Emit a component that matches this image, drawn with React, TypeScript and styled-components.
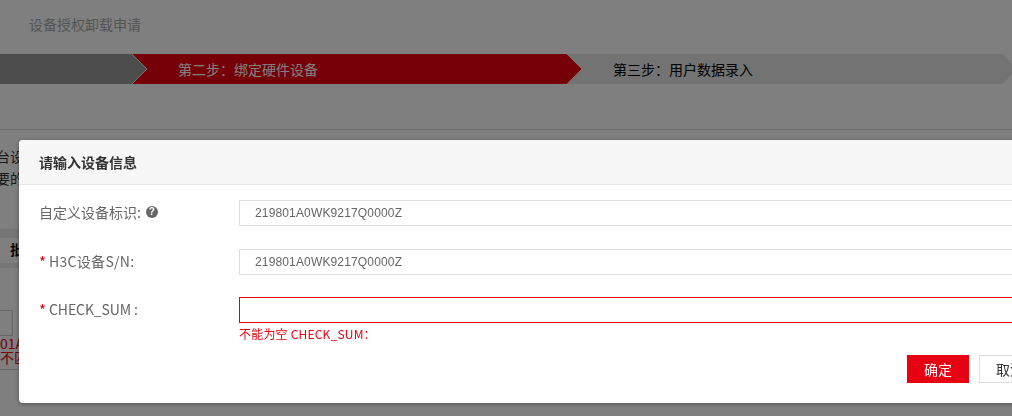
import React from "react";
import styled, { createGlobalStyle } from "styled-components";

const GlobalStyle = createGlobalStyle`
  html, body {
    margin: 0;
    padding: 0;
    width: 1012px;
    height: 416px;
    overflow: hidden;
    background: #fff;
    font-family: "Noto Sans CJK SC", "Liberation Sans", sans-serif;
  }
  * { box-sizing: border-box; }
`;

const Page = styled.div`
  width: 1012px;
  height: 416px;
  overflow: hidden;
  background: #fff;
`;

const PageTitle = styled.div`
  height: 54px;
  padding: 0 0 6px 29px;
  display: flex;
  align-items: center;
  font-size: 14px;
  color: #a8a8a8;
`;

const StepBar = styled.div`
  display: flex;
  height: 30px;
`;

const Step = styled.div<{ $width: number; $bg: string; $color: string; $z: number }>`
  position: relative;
  z-index: ${(p) => p.$z};
  flex: 0 0 ${(p) => p.$width}px;
  height: 30px;
  padding-left: 46px;
  display: flex;
  align-items: center;
  font-size: 14px;
  background: ${(p) => p.$bg};
  color: ${(p) => p.$color};
`;

const Arrow = styled.svg`
  position: absolute;
  top: 0;
  left: 100%;
  width: 16px;
  height: 30px;
`;

const Notice = styled.div`
  height: 46px;
  border-bottom: 1px solid #d8d8d8;
`;

const NoticeLines = styled.div`
  padding-top: 15px;
  height: 99px;
  font-size: 14px;
  line-height: 22px;
  color: #333;
  white-space: nowrap;
`;

const ClippedLine = styled.div`
  margin-left: -4px;
`;

const Band = styled.div<{ $height: number }>`
  height: ${(p) => p.$height}px;
  background: #eaeaea;
`;

const Tab = styled.div`
  height: 25px;
  padding: 0 0 3px 10px;
  display: flex;
  align-items: center;
  font-size: 14px;
  font-weight: 700;
  color: #111;
`;

const ErrorBlock = styled.div`
  height: 102px;
  padding-top: 42px;
  border-bottom: 1px solid #ccc;
`;

const GhostInput = styled.div`
  width: 13px;
  height: 26px;
  border: 1px solid #ccc;
  border-left: none;
`;

const GhostError = styled.div`
  font-size: 14px;
  line-height: 14px;
  color: #e60012;
  white-space: nowrap;
  &:first-of-type {
    margin-top: 1px;
  }
`;

const Overlay = styled.div`
  position: fixed;
  inset: 0;
  z-index: 10;
  display: flex;
  align-items: flex-start;
  padding: 140px 0 0 19px;
  background: rgba(0, 0, 0, 0.5);
  overflow: hidden;
`;

const Modal = styled.div`
  flex: 0 0 1042px;
  height: 263px;
  background: #fff;
  border-radius: 4px;
  box-shadow: 0 1px 4px rgba(0, 0, 0, 0.35);
  overflow: hidden;
`;

const ModalHeader = styled.div`
  height: 45px;
  padding: 0 0 1px 20px;
  display: flex;
  align-items: center;
  background: #f7f7f7;
  border-bottom: 1px solid #e8e8e8;
  font-size: 14px;
  font-weight: 700;
  color: #333;
`;

const ModalBody = styled.div`
  padding: 15px 20px 0;
`;

const FormRow = styled.div<{ $gap: number }>`
  display: grid;
  grid-template-columns: 200px 1fr;
  margin-bottom: ${(p) => p.$gap}px;
`;

const Label = styled.div`
  height: 26px;
  padding-bottom: 2px;
  display: flex;
  align-items: center;
  font-size: 14px;
  color: #666;
  white-space: nowrap;
`;

const Star = styled.span`
  width: 10px;
  flex: none;
  font-size: 15px;
  color: #e60012;
`;

const LabelText = styled.span<{ $spacing: number }>`
  letter-spacing: ${(p) => p.$spacing}px;
`;

const HelpIcon = styled.span`
  width: 12px;
  height: 12px;
  margin-left: 5px;
  border-radius: 50%;
  background: #666;
  color: #fff;
  font: 700 10px/12px "Liberation Sans", sans-serif;
  text-align: center;
`;

const FieldBox = styled.div<{ $invalid?: boolean }>`
  height: 26px;
  padding-left: 15px;
  display: flex;
  align-items: center;
  border: 1px solid ${(p) => (p.$invalid ? "#e60012" : "#dddde3")};
  font: 12px "Liberation Sans", sans-serif;
  letter-spacing: 0.15px;
  color: #666;
`;

const FieldError = styled.div`
  grid-column: 2;
  height: 20px;
  display: flex;
  align-items: center;
  font-size: 12px;
  letter-spacing: 0.2px;
  color: #e60012;
`;

const Actions = styled.div`
  display: flex;
  justify-content: flex-end;
  gap: 10px;
  margin-top: 12px;
`;

const Button = styled.button<{ $primary?: boolean }>`
  width: 62px;
  height: 28px;
  padding: 0;
  border: 1px solid ${(p) => (p.$primary ? "#e60012" : "#dddde3")};
  background: ${(p) => (p.$primary ? "#e60012" : "#fff")};
  color: ${(p) => (p.$primary ? "#fff" : "#333")};
  font-family: inherit;
  font-size: 14px;
`;

const chevron = (fill: string) => (
  <Arrow viewBox="0 0 16 30">
    <path d="M0 0 L15 15 L0 30 Z" fill={fill} />
    <path d="M0 0 L15 15 L0 30" fill="none" stroke="#fff" strokeOpacity="0.75" strokeWidth="1" />
  </Arrow>
);

const App = () => {
  return (
    <Page>
      <GlobalStyle />
      <PageTitle>设备授权卸载申请</PageTitle>
      <StepBar>
        <Step $width={132} $bg="#9a9a9a" $color="#fff" $z={3}>
          {chevron("#9a9a9a")}
        </Step>
        <Step $width={435} $bg="#ec0010" $color="#fff" $z={2}>
          第二步：绑定硬件设备
          {chevron("#ec0010")}
        </Step>
        <Step $width={436} $bg="#e6e6e6" $color="#000" $z={1}>
          第三步：用户数据录入
          {chevron("#e6e6e6")}
        </Step>
      </StepBar>
      <Notice />
      <NoticeLines>
        <ClippedLine>台设备</ClippedLine>
        <ClippedLine>要的</ClippedLine>
      </NoticeLines>
      <Band $height={9} />
      <Tab>批</Tab>
      <Band $height={5} />
      <ErrorBlock>
        <GhostInput />
        <GhostError>01A</GhostError>
        <GhostError>不匹</GhostError>
      </ErrorBlock>

      <Overlay>
        <Modal>
          <ModalHeader>请输入设备信息</ModalHeader>
          <ModalBody>
            <FormRow $gap={23}>
              <Label>
                自定义设备标识:
                <HelpIcon>?</HelpIcon>
              </Label>
              <FieldBox>219801A0WK9217Q0000Z</FieldBox>
            </FormRow>
            <FormRow $gap={22}>
              <Label>
                <Star>*</Star>
                <LabelText $spacing={0.3}>H3C设备S/N:</LabelText>
              </Label>
              <FieldBox>219801A0WK9217Q0000Z</FieldBox>
            </FormRow>
            <FormRow $gap={0}>
              <Label>
                <Star>*</Star>
                <LabelText $spacing={-0.1}>CHECK_SUM :</LabelText>
              </Label>
              <FieldBox $invalid />
              <FieldError>不能为空 CHECK_SUM：</FieldError>
            </FormRow>
            <Actions>
              <Button $primary>确定</Button>
              <Button>取消</Button>
            </Actions>
          </ModalBody>
        </Modal>
      </Overlay>
    </Page>
  );
};

export default App;
